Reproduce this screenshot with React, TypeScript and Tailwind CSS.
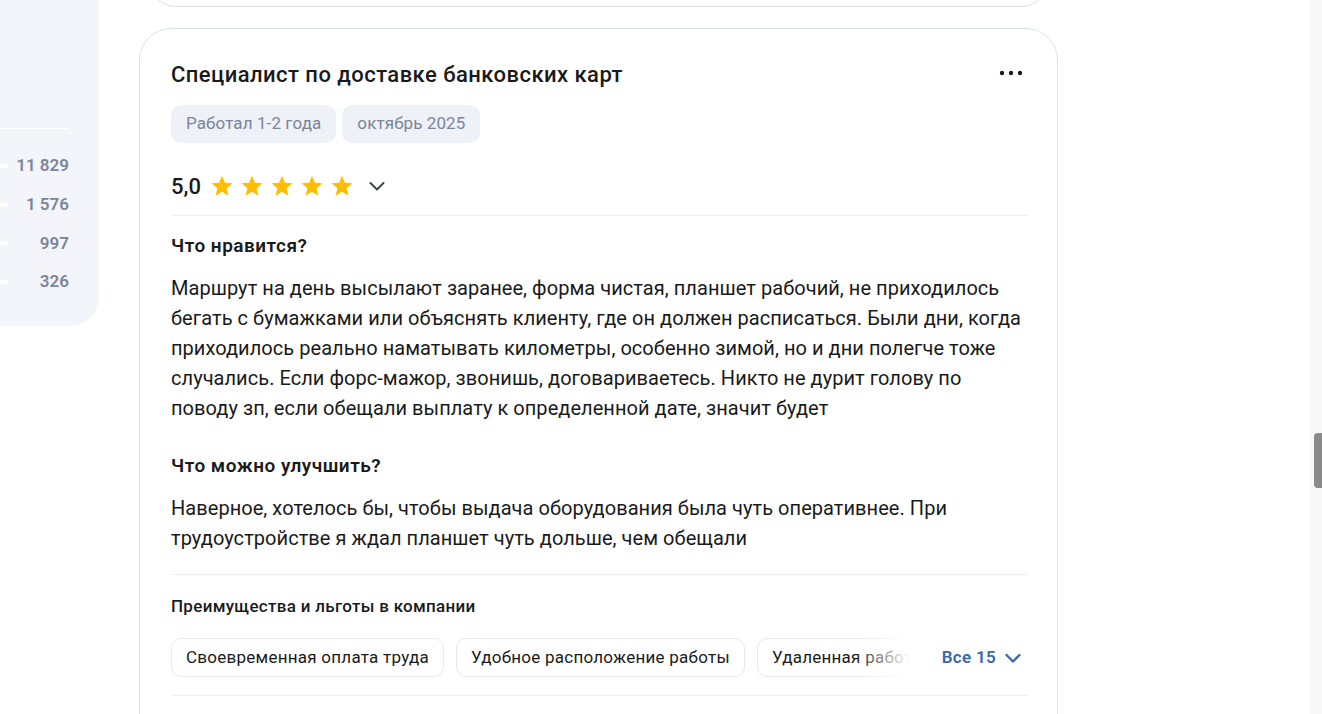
import React from "react";

const font = { fontFamily: "Roboto, 'Noto Sans', sans-serif" };

const counts = ["11 829", "1 576", "997", "326"];

const benefits = [
    "Своевременная оплата труда",
    "Удобное расположение работы",
    "Удаленная работа",
    "Бесплатное обучение",
];

function Star() {
    return (
        <svg width="22" height="22" viewBox="0 0 24 24">
            <polygon
                points="12,0.8 15.1,8.5 23.4,9.1 17,14.5 19,22.7 12,18.3 5,22.7 7,14.5 0.6,9.1 8.9,8.5"
                fill="#ffbc00"
            />
        </svg>
    );
}

function Chevron({ color, width = 2 }: { color: string; width?: number }) {
    return (
        <svg width="20" height="20" viewBox="0 0 20 20" fill="none">
            <path d="M3.5 7l6.5 6.5L16.5 7" stroke={color} strokeWidth={width} strokeLinecap="round" strokeLinejoin="round" />
        </svg>
    );
}

export default function App() {
    return (
        <div className="relative h-[714px] w-[1322px] overflow-hidden bg-white" style={font}>
            <div className="flex items-start">
                {/* Left: rating summary (cut off) */}
                <div className="w-[99px] h-[326px] bg-[#f4f5fa] rounded-br-[28px] pt-[128px]">
                    <div className="w-[68px] h-px bg-white" />
                    <div className="flex flex-col pt-[25px] gap-[14.7px]">
                        {counts.map((c) => (
                            <div key={c} className="flex items-center justify-between w-[69px] h-6">
                                <div className="w-2 h-[4px] rounded-r-full bg-white" />
                                <span className="text-[17px] font-semibold text-[#7b8699]">{c}</span>
                            </div>
                        ))}
                    </div>
                </div>

                {/* Reviews column */}
                <div className="ml-[40px] w-[919px] flex flex-col">
                    <div className="-mt-[60px] h-[67px] rounded-[32px] border border-[#dde2ea] mx-[6px]" />

                    <div className="mt-[21px] h-[760px] rounded-[32px] border border-[#dde2ea] pl-[31px] pr-[29px] pt-[32px]">
                        <div className="flex items-center justify-between h-[28px]">
                            <h2 className="text-[22px] leading-[28px] font-medium tracking-[0.45px] text-[#1a1a1a]">
                                Специалист по доставке банковских карт
                            </h2>
                            <svg width="32" height="24" viewBox="0 0 32 24" className="-mt-[4px]">
                                <circle cx="6" cy="12" r="2.2" fill="#1a1a1a" />
                                <circle cx="15" cy="12" r="2.2" fill="#1a1a1a" />
                                <circle cx="24" cy="12" r="2.2" fill="#1a1a1a" />
                            </svg>
                        </div>

                        <div className="mt-[16px] flex gap-[6px]">
                            <span className="h-[38px] px-[15px] flex items-center rounded-[10px] bg-[#eef1f7] text-[17px] tracking-[0.1px] text-[#7b8599]">
                                Работал 1-2 года
                            </span>
                            <span className="h-[38px] px-[15px] flex items-center rounded-[10px] bg-[#eef1f7] text-[17px] tracking-[0.1px] text-[#7b8599]">
                                октябрь 2025
                            </span>
                        </div>

                        <div className="mt-[29px] h-[28px] flex items-center">
                            <span className="text-[22px] font-medium text-[#1a1a1a] mr-[10px]">5,0</span>
                            <div className="flex gap-[8px]">
                                <Star />
                                <Star />
                                <Star />
                                <Star />
                                <Star />
                            </div>
                            <span className="ml-[14px] flex items-center">
                                <Chevron color="#3d424b" />
                            </span>
                        </div>

                        <div className="mt-[15px] h-px bg-[#eef0f4]" />

                        <h3 className="mt-[18px] text-[19px] leading-[24px] font-semibold tracking-[0.5px] text-[#1a1a1a]">Что нравится?</h3>
                        <p className="mt-[15px] text-[20px] leading-[30px] tracking-[0.05px] text-[#1a1a1a]">
                            Маршрут на день высылают заранее, форма чистая, планшет рабочий, не приходилось бегать с бумажками или объяснять клиенту, где он должен расписаться. Были дни, когда приходилось реально наматывать километры, особенно зимой, но и дни полегче тоже случались. Если форс-мажор, звонишь, договариваетесь. Никто не дурит голову по поводу зп, если обещали выплату к определенной дате, значит будет
                        </p>

                        <h3 className="mt-[31px] text-[19px] leading-[24px] font-semibold tracking-[0.5px] text-[#1a1a1a]">Что можно улучшить?</h3>
                        <p className="mt-[15px] text-[20px] leading-[30px] tracking-[0.05px] text-[#1a1a1a]">
                            Наверное, хотелось бы, чтобы выдача оборудования была чуть оперативнее. При трудоустройстве я ждал планшет чуть дольше, чем обещали
                        </p>

                        <div className="mt-[21px] h-px bg-[#eef0f4]" />

                        <h4 className="mt-[19px] text-[17px] leading-[24px] font-medium tracking-[0.3px] text-[#1a1a1a]">
                            Преимущества и льготы в компании
                        </h4>

                        <div className="mt-[20px] flex items-center">
                            <div className="relative w-[739px] overflow-hidden">
                                <div className="flex gap-[12px] w-max">
                                    {benefits.map((b) => (
                                        <span
                                            key={b}
                                            className="h-[39px] px-[14px] flex items-center rounded-[10px] border border-[#e6e9f0] bg-white text-[17px] tracking-[0.25px] text-[#1a1a1a] whitespace-nowrap"
                                        >
                                            {b}
                                        </span>
                                    ))}
                                </div>
                                <div className="absolute right-0 top-0 h-full w-[56px] bg-gradient-to-r from-white/0 to-white" />
                            </div>
                            <button className="ml-auto flex items-center gap-[7px] pr-[5px] text-[17px] font-semibold tracking-[0.3px] text-[#3a67b0]">
                                Все 15
                                <Chevron color="#3a67b0" width={2.4} />
                            </button>
                        </div>

                        <div className="mt-[18px] h-px bg-[#eef0f4]" />
                    </div>
                </div>
            </div>

            {/* Scrollbar */}
            <div className="absolute right-0 top-0 h-full w-[12px] bg-[#f8f8f8]">
                <div className="absolute right-0 top-[433px] h-[55px] w-[8px] rounded-l-[4px] bg-[#8a8a8a]" />
            </div>
        </div>
    );
}
